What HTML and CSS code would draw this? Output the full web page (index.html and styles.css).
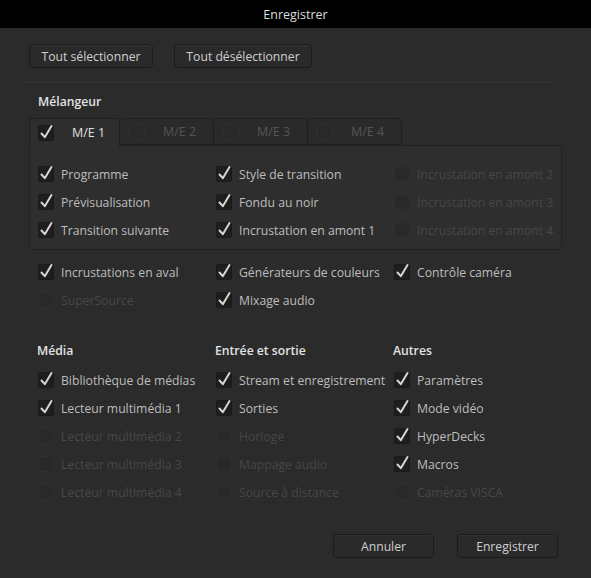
FILE: index.html
```html
<!DOCTYPE html>
<html lang="fr">
<head>
    <meta charset="UTF-8">
    <title>Enregistrer</title>
    <link rel="stylesheet" href="styles.css">
</head>
<body>
    <div class="titlebar">Enregistrer</div>

    <div class="dialog">
        <div class="actions">
            <button class="btn btn-select">Tout sélectionner</button>
            <button class="btn btn-deselect">Tout désélectionner</button>
        </div>

        <div class="divider"></div>

        <h4 class="group-title">Mélangeur</h4>

        <div class="tabs">
            <div class="tab active"><span class="box on"><svg viewBox="0 0 16 16"><path d="M3.5 8.5 L6.8 12.2 L13.5 1"/></svg></span>M/E 1</div>
            <div class="tab"><span class="box off"></span>M/E 2</div>
            <div class="tab"><span class="box off"></span>M/E 3</div>
            <div class="tab"><span class="box off"></span>M/E 4</div>
        </div>

        <div class="panel">
            <div class="grid">
                <label class="item"><span class="box on"><svg viewBox="0 0 16 16"><path d="M3.5 8.5 L6.8 12.2 L13.5 1"/></svg></span>Programme</label>
                <label class="item"><span class="box on"><svg viewBox="0 0 16 16"><path d="M3.5 8.5 L6.8 12.2 L13.5 1"/></svg></span>Style de transition</label>
                <label class="item disabled"><span class="box off"></span>Incrustation en amont 2</label>

                <label class="item"><span class="box on"><svg viewBox="0 0 16 16"><path d="M3.5 8.5 L6.8 12.2 L13.5 1"/></svg></span>Prévisualisation</label>
                <label class="item"><span class="box on"><svg viewBox="0 0 16 16"><path d="M3.5 8.5 L6.8 12.2 L13.5 1"/></svg></span>Fondu au noir</label>
                <label class="item disabled"><span class="box off"></span>Incrustation en amont 3</label>

                <label class="item"><span class="box on"><svg viewBox="0 0 16 16"><path d="M3.5 8.5 L6.8 12.2 L13.5 1"/></svg></span>Transition suivante</label>
                <label class="item"><span class="box on"><svg viewBox="0 0 16 16"><path d="M3.5 8.5 L6.8 12.2 L13.5 1"/></svg></span>Incrustation en amont 1</label>
                <label class="item disabled"><span class="box off"></span>Incrustation en amont 4</label>
            </div>
        </div>

        <div class="grid below">
            <label class="item"><span class="box on"><svg viewBox="0 0 16 16"><path d="M3.5 8.5 L6.8 12.2 L13.5 1"/></svg></span>Incrustations en aval</label>
            <label class="item"><span class="box on"><svg viewBox="0 0 16 16"><path d="M3.5 8.5 L6.8 12.2 L13.5 1"/></svg></span>Générateurs de couleurs</label>
            <label class="item"><span class="box on"><svg viewBox="0 0 16 16"><path d="M3.5 8.5 L6.8 12.2 L13.5 1"/></svg></span>Contrôle caméra</label>

            <label class="item disabled"><span class="box off"></span>SuperSource</label>
            <label class="item"><span class="box on"><svg viewBox="0 0 16 16"><path d="M3.5 8.5 L6.8 12.2 L13.5 1"/></svg></span>Mixage audio</label>
        </div>

        <div class="columns">
            <div class="column">
                <h4 class="group-title">Média</h4>
                <label class="item"><span class="box on"><svg viewBox="0 0 16 16"><path d="M3.5 8.5 L6.8 12.2 L13.5 1"/></svg></span>Bibliothèque de médias</label>
                <label class="item"><span class="box on"><svg viewBox="0 0 16 16"><path d="M3.5 8.5 L6.8 12.2 L13.5 1"/></svg></span>Lecteur multimédia 1</label>
                <label class="item disabled"><span class="box off"></span>Lecteur multimédia 2</label>
                <label class="item disabled"><span class="box off"></span>Lecteur multimédia 3</label>
                <label class="item disabled"><span class="box off"></span>Lecteur multimédia 4</label>
            </div>
            <div class="column">
                <h4 class="group-title">Entrée et sortie</h4>
                <label class="item"><span class="box on"><svg viewBox="0 0 16 16"><path d="M3.5 8.5 L6.8 12.2 L13.5 1"/></svg></span>Stream et enregistrement</label>
                <label class="item"><span class="box on"><svg viewBox="0 0 16 16"><path d="M3.5 8.5 L6.8 12.2 L13.5 1"/></svg></span>Sorties</label>
                <label class="item disabled"><span class="box off"></span>Horloge</label>
                <label class="item disabled"><span class="box off"></span>Mappage audio</label>
                <label class="item disabled"><span class="box off"></span>Source à distance</label>
            </div>
            <div class="column">
                <h4 class="group-title">Autres</h4>
                <label class="item"><span class="box on"><svg viewBox="0 0 16 16"><path d="M3.5 8.5 L6.8 12.2 L13.5 1"/></svg></span>Paramètres</label>
                <label class="item"><span class="box on"><svg viewBox="0 0 16 16"><path d="M3.5 8.5 L6.8 12.2 L13.5 1"/></svg></span>Mode vidéo</label>
                <label class="item"><span class="box on"><svg viewBox="0 0 16 16"><path d="M3.5 8.5 L6.8 12.2 L13.5 1"/></svg></span>HyperDecks</label>
                <label class="item"><span class="box on"><svg viewBox="0 0 16 16"><path d="M3.5 8.5 L6.8 12.2 L13.5 1"/></svg></span>Macros</label>
                <label class="item disabled"><span class="box off"></span>Caméras VISCA</label>
            </div>
        </div>

        <div class="footer">
            <button class="btn btn-footer">Annuler</button>
            <button class="btn btn-footer">Enregistrer</button>
        </div>
    </div>
</body>
</html>
```

FILE: styles.css
```css
body {
    margin: 0;
    background-color: #2b2b2b;
    font-family: "Open Sans", "Noto Sans", sans-serif;
    font-size: 12px;
    color: #bdbdbd;
}
.titlebar {
    height: 28px;
    background: #000;
    color: #dcdcdc;
    display: flex;
    align-items: center;
    justify-content: center;
    font-size: 12.5px;
}
.dialog {
    padding: 16px 29px 0 29px;
}
.actions {
    display: flex;
    gap: 21px;
}
.btn {
    height: 24px;
    background: #2a2a2a;
    border: 1px solid #1b1b1b;
    border-radius: 4px;
    color: #cfcfcf;
    font-family: inherit;
    font-size: 12.2px;
    padding: 0;
    box-shadow: inset 0 1px 0 #333;
}
.btn-select {
    width: 124px;
}
.btn-deselect {
    width: 138px;
}
.divider {
    margin: 14px 0 0 -5px;
    width: 531px;
    border-top: 1px solid #343434;
}
.group-title {
    margin: 0;
    padding-left: 9px;
    font-size: 12.2px;
    line-height: 16px;
    font-weight: 600;
    color: #e2e2e2;
}
.divider + .group-title {
    margin-top: 11px;
}
.tabs {
    display: flex;
    margin-top: 8px;
    position: relative;
    z-index: 1;
}
.tab {
    width: 94px;
    height: 27px;
    box-sizing: border-box;
    display: flex;
    align-items: center;
    padding-left: 9px;
    background: #2a2a2a;
    border: 1px solid #1f1f1f;
    border-left: none;
    border-radius: 4px 4px 0 0;
    color: #555;
    font-size: 12.5px;
}
.tab .box {
    margin-right: 18px;
}
.tab.active {
    width: 91px;
    height: 28px;
    margin-bottom: -1px;
    background: #2e2e2e;
    border-left: 1px solid #1f1f1f;
    border-bottom: none;
    color: #e0e0e0;
    padding-left: 8px;
}
.panel {
    width: 533px;
    height: 105px;
    box-sizing: border-box;
    background: #2e2e2e;
    border: 1px solid #222;
    border-radius: 0 4px 4px 4px;
    padding: 14px 0 0 8px;
}
.grid {
    display: grid;
    grid-template-columns: 178px 178px 178px;
}
.grid.below {
    margin-top: 8px;
    padding-left: 9px;
}
.item {
    height: 28px;
    display: flex;
    align-items: center;
    gap: 7px;
    white-space: nowrap;
    color: #bdbdbd;
    font-size: 12.2px;
}
.item.disabled {
    color: #474747;
}
.box {
    width: 16px;
    height: 16px;
    box-sizing: border-box;
    border-radius: 2px;
    flex: none;
    position: relative;
}
.box.on {
    background: #1e1e1e;
    border: 1px solid #1a1a1a;
}
.box.off {
    background: #292929;
    border: 1px solid #2f2f2f;
}
.box svg {
    position: absolute;
    left: -1px;
    top: -1px;
    width: 16px;
    height: 16px;
    overflow: visible;
}
.box path {
    fill: none;
    stroke: #d6d6d6;
    stroke-width: 2;
    stroke-linecap: round;
    stroke-linejoin: round;
}
.columns {
    display: grid;
    grid-template-columns: 178px 178px 178px;
    margin-top: 29px;
}
.column .group-title {
    padding-left: 8px;
    margin-bottom: 7px;
}
.column .item {
    padding-left: 9px;
}
.footer {
    display: flex;
    justify-content: flex-end;
    gap: 23px;
    margin: 28px 4px 0 0;
}
.btn-footer {
    width: 101px;
}
```
